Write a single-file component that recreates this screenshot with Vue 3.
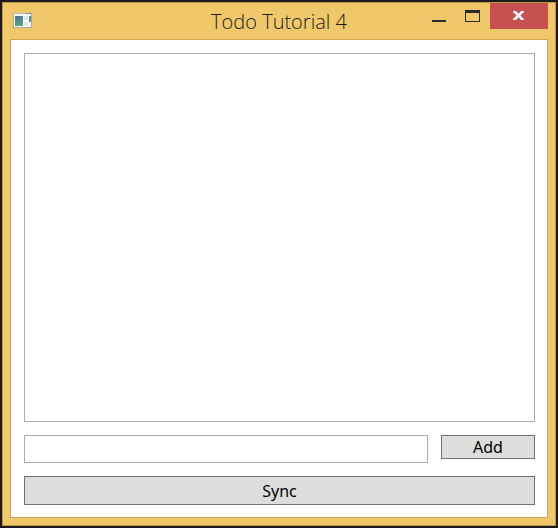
<script setup>
import { ref } from 'vue'

const todos = ref([])
const draft = ref('')

function addTodo() {
  const text = draft.value.trim()
  if (!text) return
  todos.value.push(text)
  draft.value = ''
}
</script>

<template>
  <div class="window">
    <div class="frame">
      <header class="titlebar">
        <svg class="app-icon" width="20" height="16" viewBox="0 0 20 16" aria-hidden="true">
          <defs>
            <linearGradient id="pane" gradientUnits="userSpaceOnUse" x1="3" y1="3" x2="9" y2="13">
              <stop offset="0" stop-color="#4674a0" />
              <stop offset="1" stop-color="#58b078" />
            </linearGradient>
          </defs>
          <rect x="0" y="0" width="19" height="15" fill="#a9a9a0" />
          <rect x="1" y="1" width="17" height="13" fill="#f8f9f8" />
          <rect x="1" y="0" width="17" height="1" fill="#b4bcc4" />
          <rect x="13" y="0" width="2" height="1" fill="#6a7f98" />
          <rect x="16" y="0" width="2" height="1" fill="#6a7f98" />
          <rect x="2" y="3" width="8" height="10" fill="url(#pane)" />
          <rect x="11" y="3" width="4" height="4" fill="#e4e6e6" />
          <rect x="11" y="9" width="4" height="4" fill="#e9eaea" />
          <rect x="16" y="3" width="2" height="6" fill="#4c9690" />
        </svg>
        <h1 class="title">Todo Tutorial 4</h1>
        <div class="controls">
          <button class="control" type="button" aria-label="Minimize">
            <svg width="14" height="12" viewBox="0 0 14 12"><rect y="10" width="14" height="2" fill="#2a2a2a" /></svg>
          </button>
          <button class="control" type="button" aria-label="Maximize">
            <svg width="16" height="12" viewBox="0 0 16 12">
              <path d="M0 0H15V12H0ZM1 3V11H14V3Z" fill="#2a2a2a" fill-rule="evenodd" />
            </svg>
          </button>
          <button class="control close" type="button" aria-label="Close">
            <svg width="12" height="10" viewBox="0 0 12 10">
              <path d="M0 0H3L5.500 2.800L8 0H11V1L7.300 4.500L11 8V9H8L5.500 6.200L3 9H0V8L3.700 4.500L0 1Z" fill="#fff" />
            </svg>
          </button>
        </div>
      </header>
      <main class="client">
        <ul class="list" aria-label="Todo items">
          <li v-for="(todo, i) in todos" :key="i">{{ todo }}</li>
        </ul>
        <form class="entry" @submit.prevent="addTodo">
          <input v-model="draft" class="field" type="text" aria-label="New todo" />
          <button class="button add" type="submit">Add</button>
        </form>
        <button class="button sync" type="button">Sync</button>
      </main>
    </div>
  </div>
</template>

<style>
body {
  margin: 0;
  background: #1c1a1c;
}
</style>

<style scoped>
.window {
  box-sizing: border-box;
  min-height: 100vh;
  padding: 2px;
  display: flex;
  background: #1c1a1c;
  font-family: "Noto Sans", "Open Sans", sans-serif;
}
.frame {
  flex: 1;
  min-width: 0;
  display: flex;
  flex-direction: column;
  padding: 0 7px 7px;
  border: 1px solid #b8964a;
  background: #f0c869;
}
.titlebar {
  height: 36px;
  display: grid;
  grid-template-columns: 1fr auto 1fr;
  align-items: start;
}
.app-icon {
  margin: 10px 0 0 3px;
}
.title {
  margin: 5px 0 0;
  font-family: "Open Sans", "Noto Sans", sans-serif;
  font-size: 20px;
  line-height: 28px;
  font-weight: 300;
  color: #1c1c1c;
}
.controls {
  display: flex;
  justify-content: flex-end;
}
.control {
  width: 34px;
  height: 26px;
  padding: 0;
  display: flex;
  align-items: center;
  justify-content: center;
  border: 0;
  background: transparent;
}
.close {
  width: 58px;
  background: #c75050;
}
.client {
  flex: 1;
  display: flex;
  flex-direction: column;
  gap: 13px;
  padding: 13px 12px 12px 13px;
  background: #fff;
  border: 1px solid #cba654;
}
.list {
  flex: 1;
  margin: 0;
  padding: 0;
  list-style: none;
  border: 1px solid #abadb3;
  font-size: 16px;
}
.entry {
  display: flex;
  align-items: flex-start;
  gap: 13px;
}
.field {
  box-sizing: border-box;
  flex: 1;
  min-width: 0;
  height: 28px;
  padding: 0 4px;
  border: 1px solid #abadb3;
  background: #fff;
  font: inherit;
  font-size: 16px;
}
.button {
  box-sizing: border-box;
  padding: 0;
  border: 1px solid #707070;
  background: #ddd;
  color: #000;
  font-family: inherit;
  font-size: 16px;
  line-height: 20px;
}
.add {
  width: 94px;
  height: 24px;
}
.sync {
  height: 29px;
}
</style>
